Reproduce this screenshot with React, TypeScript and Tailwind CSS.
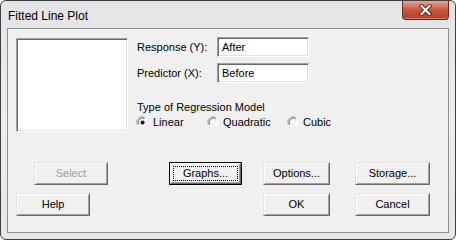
import React from "react";

const font = { fontFamily: '"Liberation Sans", Arial, sans-serif' };

function Btn({
  label,
  w,
  disabled,
  focused,
  className = "",
}: {
  label: string;
  w: string;
  disabled?: boolean;
  focused?: boolean;
  className?: string;
}) {
  if (focused) {
    return (
      <div className={`${w} h-[23px] border border-black ${className}`}>
        <div className="w-full h-full bg-[#f0f0f0] border border-t-white border-l-white border-r-[#696969] border-b-[#696969] shadow-[inset_-1px_-1px_0_#a0a0a0] flex p-[2px]">
          <div className="flex-1 border border-dotted border-black flex items-center justify-center text-[11px] text-black">
            {label}
          </div>
        </div>
      </div>
    );
  }
  return (
    <div
      className={`${w} h-[23px] bg-[#f0f0f0] border border-t-[#e3e3e3] border-l-[#e3e3e3] border-r-[#696969] border-b-[#696969] shadow-[inset_1px_1px_0_#ffffff,inset_-1px_-1px_0_#a0a0a0] flex items-center justify-center text-[11px] ${
        disabled ? "text-[#a0a0a0]" : "text-black"
      } ${className}`}
    >
      {label}
    </div>
  );
}

function Radio({ checked }: { checked?: boolean }) {
  return (
    <svg width="13" height="13" viewBox="0 0 13 13" className="shrink-0">
      <path d="M1.5 9 A5.5 5.5 0 0 1 9 1.5" fill="none" stroke="#a0a0a0" strokeWidth="1" />
      <path d="M9 1.5 A5.5 5.5 0 0 1 1.5 9" fill="none" stroke="#ffffff" strokeWidth="1" />
      <circle cx="6.5" cy="6.5" r="4.5" fill="#ffffff" />
      <path d="M2.5 8.5 A4.5 4.5 0 0 1 8.5 2.5" fill="none" stroke="#696969" strokeWidth="1" />
      <path d="M8.5 2.5 A4.5 4.5 0 0 1 2.5 8.5" fill="none" stroke="#e3e3e3" strokeWidth="1" />
      {checked && <circle cx="6.5" cy="6.5" r="2" fill="#000000" />}
    </svg>
  );
}

function Field({ value }: { value: string }) {
  return (
    <div className="w-[92px] h-[20px] bg-white border border-t-[#a0a0a0] border-l-[#a0a0a0] border-r-white border-b-white shadow-[inset_1px_1px_0_#696969,inset_-1px_-1px_0_#e3e3e3] flex items-center pl-[4px] text-[11px] text-black">
      {value}
    </div>
  );
}

export default function App() {
  return (
    <div className="w-[456px] h-[240px] bg-white" style={font}>
      <div className="w-[456px] h-[240px] rounded-[6px] border border-[#3e3e3e] bg-gradient-to-b from-[#e3e4e5] via-[#ededed] to-[#e6e6e6] flex flex-col px-[6px] pb-[6px]">
        {/* title bar */}
        <div className="h-[27px] flex items-start justify-between">
          <div className="pl-[1px] pt-[8px] text-[12px] leading-[14px] text-black">Fitted Line Plot</div>
          <div className="w-[47px] h-[19px] rounded-b-[4px] border border-t-0 border-[#6b2a22] bg-gradient-to-b from-[#e4a597] via-[#c9523f] to-[#b8402c] shadow-[inset_0_-1px_0_#d77a66] flex items-center justify-center">
            <svg width="13" height="12" viewBox="0 0 13 12">
              <path d="M2.5 2 L10.5 10 M10.5 2 L2.5 10" stroke="#5a2a22" strokeWidth="4" strokeLinecap="square" />
              <path d="M2.5 2 L10.5 10 M10.5 2 L2.5 10" stroke="#ffffff" strokeWidth="2" strokeLinecap="square" />
            </svg>
          </div>
        </div>
        {/* client */}
        <div className="flex-1 bg-[#f0f0f0] border border-[#8e8e8e] flex flex-col text-[11px] text-black">
          <div className="flex pl-[8px] pt-[8px] h-[103px]">
            <div className="mt-[1px] w-[112px] h-[94px] bg-white border border-t-[#a0a0a0] border-l-[#a0a0a0] border-r-white border-b-white shadow-[inset_1px_1px_0_#696969,inset_-1px_-1px_0_#e3e3e3]" />
            <div className="ml-[9px] flex flex-col">
              <div className="flex items-center h-[20px]">
                <div className="w-[80px]">Response (Y):</div>
                <Field value="After" />
              </div>
              <div className="flex items-center h-[20px] mt-[6px]">
                <div className="w-[80px]">Predictor (X):</div>
                <Field value="Before" />
              </div>
              <div className="mt-[17px] h-[14px] leading-[14px]">Type of Regression Model</div>
              <div className="mt-[1px] h-[14px] flex items-center -ml-[1px]">
                <div className="w-[71px] flex items-center gap-[4px]">
                  <Radio checked />
                  <span>Linear</span>
                </div>
                <div className="w-[80px] flex items-center gap-[3px]">
                  <Radio />
                  <span>Quadratic</span>
                </div>
                <div className="flex items-center gap-[3px]">
                  <Radio />
                  <span>Cubic</span>
                </div>
              </div>
            </div>
          </div>
          <div className="flex mt-[30px] pl-[26px]">
            <Btn label="Select" w="w-[74px]" disabled />
            <Btn label="Graphs..." w="w-[73px]" focused className="ml-[61px]" />
            <Btn label="Options..." w="w-[67px]" className="ml-[21px]" />
            <Btn label="Storage..." w="w-[75px]" className="ml-[25px]" />
          </div>
          <div className="flex mt-[8px] pl-[8px]">
            <Btn label="Help" w="w-[74px]" />
            <Btn label="OK" w="w-[67px]" className="ml-[173px]" />
            <Btn label="Cancel" w="w-[75px]" className="ml-[25px]" />
          </div>
        </div>
      </div>
    </div>
  );
}
